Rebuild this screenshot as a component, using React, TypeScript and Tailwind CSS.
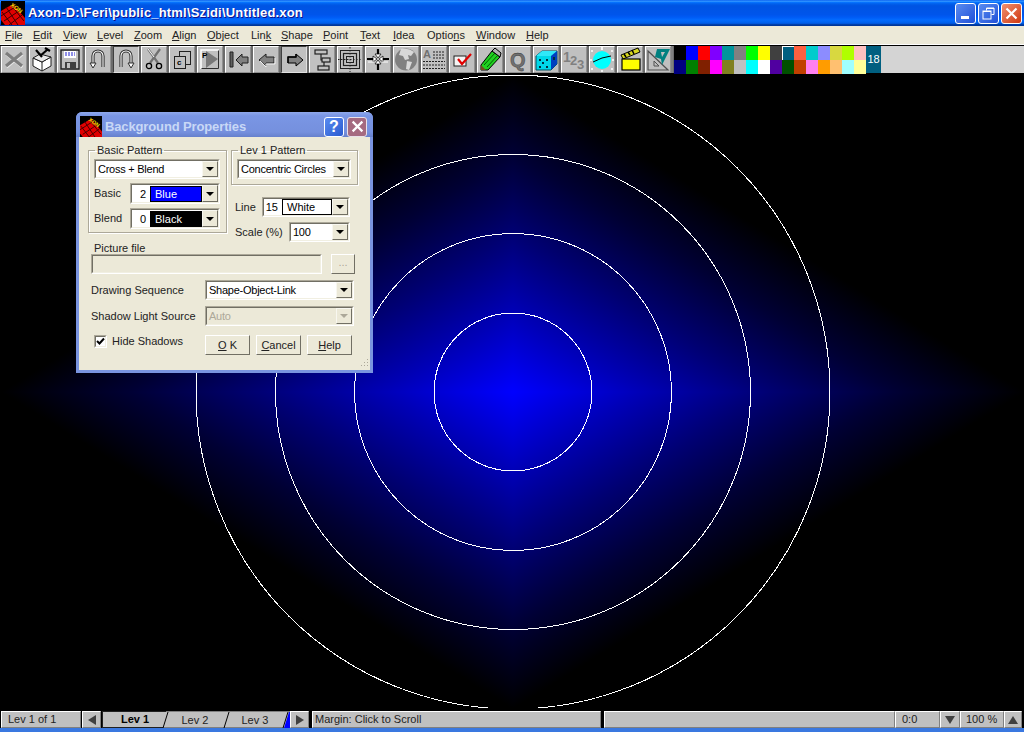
import React from 'react';

const ui = { fontFamily: '"Liberation Sans", Arial, sans-serif' };

const menus = [
  { pre: '', u: 'F', post: 'ile', w: 'w-[28px]' },
  { pre: '', u: 'E', post: 'dit', w: 'w-[30px]' },
  { pre: '', u: 'V', post: 'iew', w: 'w-[34px]' },
  { pre: '', u: 'L', post: 'evel', w: 'w-[37px]' },
  { pre: '', u: 'Z', post: 'oom', w: 'w-[38px]' },
  { pre: '', u: 'A', post: 'lign', w: 'w-[35px]' },
  { pre: '', u: 'O', post: 'bject', w: 'w-[44px]' },
  { pre: 'Lin', u: 'k', post: '', w: 'w-[30px]' },
  { pre: '', u: 'S', post: 'hape', w: 'w-[42px]' },
  { pre: '', u: 'P', post: 'oint', w: 'w-[37px]' },
  { pre: '', u: 'T', post: 'ext', w: 'w-[33px]' },
  { pre: '', u: 'I', post: 'dea', w: 'w-[34px]' },
  { pre: 'Optio', u: 'n', post: 's', w: 'w-[49px]' },
  { pre: '', u: 'W', post: 'indow', w: 'w-[50px]' },
  { pre: '', u: 'H', post: 'elp', w: 'w-[30px]' },
];

const paletteTop = ['#000000', '#0000ff', '#ff0000', '#8000ff', '#00959c', '#808080', '#00ff00', '#ffff00', '#404040', '#005f80', '#ff6040', '#00cccc', '#8c8cff', '#d8d840', '#b0ff00', '#ffc0c0'];
const paletteBottom = ['#000080', '#008000', '#802000', '#ff00ff', '#808020', '#c0c0c0', '#00ffff', '#ffffff', '#5000a0', '#005000', '#c04000', '#ff80f0', '#ff9c00', '#ffc070', '#a0ffff', '#ffff99'];

// quadrants of the diamond blend on the canvas
const quadrants = [
  { sx: 512, sy: 317 },
  { sx: -512, sy: 317 },
  { sx: 512, sy: -317 },
  { sx: -512, sy: -317 },
];

function Logo({ className }: { className: string }) {
  return (
    <svg viewBox="0 0 24 24" className={className}>
      <rect width="24" height="24" fill="#000" />
      <path d="M0 10 L12 3 L24 17 L24 24 L4 24 L0 19 Z" fill="#e00000" />
      <path d="M0 15 L14 6 M3 20 L18 10 M8 24 L21 14 M5 6 L17 24 M1 11 L11 24 M10 4 L23 20" stroke="#400000" strokeWidth="1" />
      <text x="9" y="5" fontSize="6" fontWeight="700" fill="#f0e000" transform="rotate(35 9 5)" fontFamily="Liberation Sans">XON</text>
    </svg>
  );
}

const s = { fill: 'none', stroke: '#000', strokeWidth: 1.3 };

const icons: React.ReactNode[] = [
  <g key="x">
    <path d="M4 6 L20 19 M20 6 L4 19" stroke="#e8e8e8" strokeWidth="3" transform="translate(0.5 1)" />
    <path d="M4 6 L20 19 M20 6 L4 19" stroke="#7c7c7c" strokeWidth="3.2" />
  </g>,
  <g key="box">
    <path d="M3 11 L12 15 L21 10 V19 L12 24 L3 19 Z" fill="#fff" stroke="#202020" />
    <path d="M12 15 V24" stroke="#202020" />
    <path d="M12 15 L3 11 L10 7 L21 10 Z" fill="#e8e8e8" stroke="#202020" />
    <path d="M6 3 L12 10 M10 9 L17 3 M15 1 L20 4" stroke="#000" strokeWidth="2.2" />
  </g>,
  <g key="floppy">
    <path d="M3 3 H21 V22 H3 Z" fill="#c0c0c0" stroke="#202020" strokeWidth="1.4" />
    <rect x="6" y="4" width="12" height="7" fill="#fff" />
    <path d="M7 6 H17 M7 8 H17" stroke="#2020d0" strokeDasharray="2 1" />
    <rect x="7" y="15" width="11" height="7" fill="#404040" />
    <rect x="9" y="16" width="3" height="5" fill="#c0c0c0" />
  </g>,
  <g key="undo">
    <path d="M7 18 V9 A5 5 0 0 1 17 9 V20" fill="none" stroke="#303030" strokeWidth="3.2" />
    <path d="M7 17 V9 A5 5 0 0 1 17 9 V20" fill="none" stroke="#fff" strokeWidth="1.1" />
    <path d="M4 16 L7 21 L10 16 Z" fill="#fff" stroke="#303030" />
  </g>,
  <g key="redo">
    <path d="M7 20 V9 A5 5 0 0 1 17 9 V18" fill="none" stroke="#303030" strokeWidth="3.2" />
    <path d="M7 20 V9 A5 5 0 0 1 17 9 V17" fill="none" stroke="#fff" strokeWidth="1.1" />
    <path d="M14 16 L17 21 L20 16 Z" fill="#fff" stroke="#303030" />
  </g>,
  <g key="scissors">
    <path d="M6 2 L16 16 M18 2 L8 16" stroke="#707070" strokeWidth="2.2" />
    <path d="M6 2 L12 10" stroke="#fff" />
    <circle cx="7" cy="19" r="2.6" {...s} />
    <circle cx="17" cy="19" r="2.6" {...s} />
  </g>,
  <g key="copy">
    <rect x="9.5" y="4.5" width="11" height="13" fill="#c0c0c0" stroke="#202020" />
    <rect x="4.5" y="9.5" width="11" height="12" fill="#c0c0c0" stroke="#202020" />
    <text x="7" y="18" fontSize="8" fill="#000" fontWeight="700" fontFamily="Liberation Sans">c</text>
  </g>,
  <g key="paste">
    <path d="M3 22 V3 H21" fill="none" stroke="#fff" strokeWidth="1.5" />
    <path d="M3.5 21.5 H20.5 V3.5" fill="none" stroke="#303030" />
    <path d="M8 21 L20 12 L8 4 Z" fill="#787878" />
    <text x="4" y="11" fontSize="8" fill="#000" fontWeight="700" fontFamily="Liberation Sans">P</text>
  </g>,
  <g key="first">
    <path d="M4 5 H7 V20 H4 Z" fill="#606060" stroke="#202020" />
    <path d="M10 13 L16 7 V10 H22 V16 H16 V19 Z" fill="#808080" stroke="#202020" />
  </g>,
  <g key="left">
    <path d="M5 13 L12 7 V10 H20 V16 H12 V19 Z" fill="#808080" stroke="#202020" />
    <path d="M6 14 L12 20 V17 H21 V11" fill="none" stroke="#f0f0f0" />
  </g>,
  <g key="right">
    <path d="M21 13 L14 7 V10 H6 V16 H14 V19 Z" fill="#808080" stroke="#000" />
    <path d="M14 7 V10 H6 V16" fill="none" stroke="#000" strokeWidth="1.4" />
  </g>,
  <g key="tree" fill="#c0c0c0" stroke="#202020" strokeWidth="1.2">
    <rect x="5" y="3" width="12" height="4" />
    <rect x="12" y="11" width="8" height="4" />
    <rect x="8" y="19" width="11" height="4" />
    <path d="M11 7 V13 H12 M14 15 V19" fill="none" />
  </g>,
  <g key="target" fill="none" stroke="#202020">
    <rect x="2.5" y="3.5" width="19" height="18" />
    <rect x="5.5" y="6.5" width="13" height="12" strokeWidth="1.2" />
    <rect x="8.5" y="9.5" width="7" height="6" />
    <path d="M12 0 V25 M0 12.5 H24" strokeDasharray="1.5 1.5" />
  </g>,
  <g key="arrows">
    <path d="M1 12 H8 M23 12 H16 M12 2 V8 M12 23 V16" stroke="#000" strokeWidth="2.2" />
    <path d="M11 12 L7 9 V15 Z M13 12 L17 9 V15 Z M12 11 L9 7 H15 Z M12 13 L9 17 H15 Z" fill="#fff" stroke="#000" strokeWidth="0.7" />
    <path d="M2 15 H8 M16 15 H22" stroke="#fff" />
  </g>,
  <g key="globe">
    <circle cx="12" cy="12.5" r="11" fill="#808080" />
    <path d="M7 2 C11 1 17 2 20 5 L17 9 L14 8 L15 12 L11 13 L9 9 L5 8 Z M13 14 L18 15 L15 23 L12 22 Z" fill="#d8d8d8" />
  </g>,
  <g key="text">
    <text x="1" y="11" fontSize="11" fontWeight="700" fill="#707070" fontFamily="Liberation Sans">A</text>
    <path d="M11 5 H23 M11 8 H23 M11 11 H23 M1 14.5 H23 M1 18 H23 M1 21.5 H23" stroke="#202020" strokeDasharray="2 1" />
  </g>,
  <g key="check">
    <rect x="4" y="9" width="12" height="10" fill="#f4f4f4" stroke="#202020" strokeWidth="1" />
    <path d="M8 12 L12 17 L21 7" fill="none" stroke="#e00000" strokeWidth="2.2" />
  </g>,
  <g key="pencil">
    <path d="M3 18 L14 4 L22 10 L10 23 L3 23 Z" fill="#20d020" stroke="#000" />
    <path d="M6 18 L17 6 M9 20 L20 8" stroke="#006000" />
    <path d="M3 18 L3 23 L8 23 Z" fill="#705020" />
    <path d="M14 4 L17 1 L23 6 L22 10 Z" fill="#b0b0b0" stroke="#000" />
  </g>,
  <text key="q" x="4" y="20" fontSize="20" fontWeight="700" fill="#707070" stroke="#303030" strokeWidth="0.4" fontFamily="Liberation Sans">Q</text>,
  <g key="dice">
    <path d="M2 9 L8 4 H23 V17 L17 23 H2 Z" fill="#00d8e8" stroke="#005060" />
    <path d="M2 9 L8 4 H23 L17 9 Z" fill="#30e8f8" />
    <path d="M17 9 V23 L23 17 V4 Z" fill="#0040c0" />
    <path d="M5 12 h2 v2 h-2 z M12 12 h2 v2 h-2 z M8 15 h2 v2 h-2 z M5 19 h2 v2 h-2 z M12 19 h2 v2 h-2 z M19 10 h2 v3 h-2 z" fill="#003040" />
  </g>,
  <g key="n123" fill="#808080" fontFamily="Liberation Sans" fontWeight="700">
    <text x="1" y="15" fontSize="14">1</text>
    <text x="8" y="18" fontSize="13">2</text>
    <text x="15" y="22" fontSize="13">3</text>
  </g>,
  <g key="clock">
    <circle cx="12" cy="13" r="9" fill="#00ffff" />
    <path d="M3 15 L12 11 L21 9" stroke="#000" fill="none" strokeWidth="1" />
    <path d="M12 0 V3 M12 23 V26 M1 4 h2 M21 4 h2 M0 13 h2 M22 13 h2 M1 22 h2 M21 22 h2" stroke="#fff" strokeWidth="1.6" />
  </g>,
  <g key="clapper">
    <path d="M3 8 L20 1 L22 5 L5 12 Z" fill="#d8d820" stroke="#000" />
    <path d="M6 7 L8 10 M10 5 L12 8 M14 3 L16 7" stroke="#000" strokeWidth="1.5" />
    <rect x="4" y="12" width="18" height="11" fill="#ffff00" stroke="#000" strokeWidth="1.2" />
  </g>,
  <g key="square">
    <path d="M2 4 L22 23 H2 Z" fill="#c0c0c0" stroke="#505050" strokeWidth="1.2" />
    <path d="M8 14 V19 H13 Z" fill="none" stroke="#505050" />
    <path d="M11 2 H24 L16 18 L15 12 L9 10 Z" fill="#008080" />
    <path d="M15 5 H19 L16 10 Z" fill="#c0c0c0" />
  </g>,
];

function ToolButton({ pressed, children }: { pressed?: boolean; children: React.ReactNode }) {
  return (
    <div className={`w-[26px] h-[27px] mr-[2px] bg-[#c0c0c0] border ${pressed ? 'border-t-[#404040] border-l-[#404040] border-r-[#e0e0e0] border-b-[#e0e0e0]' : 'border-t-white border-l-white border-r-[#909090] border-b-[#909090]'}`}>
      <svg viewBox="0 0 24 25" className="w-[24px] h-[25px]">{children}</svg>
    </div>
  );
}

function Sunken({ className, children }: { className: string; children?: React.ReactNode }) {
  return (
    <div className={`border border-t-[#aca899] border-l-[#aca899] border-r-white border-b-white ${className}`}>
      <div className="w-full h-full border border-t-[#716f64] border-l-[#716f64] border-r-[#f1efe2] border-b-[#f1efe2] flex items-stretch">
        {children}
      </div>
    </div>
  );
}

function DropButton({ disabled }: { disabled?: boolean }) {
  return (
    <div className="w-[16px] shrink-0 bg-[#ece9d8] border border-t-[#f8f7f0] border-l-[#f8f7f0] border-r-[#716f64] border-b-[#716f64] flex items-center justify-center">
      <div className={`w-0 h-0 border-l-[4px] border-r-[4px] border-t-[4px] border-l-transparent border-r-transparent ${disabled ? 'border-t-[#aca899]' : 'border-t-black'}`} />
    </div>
  );
}

function Combo({ className, text, disabled }: { className: string; text: string; disabled?: boolean }) {
  return (
    <Sunken className={className}>
      <div className={`flex-1 pl-[2px] pt-[1px] leading-[15px] tracking-[-0.25px] whitespace-nowrap ${disabled ? 'bg-[#ece9d8] text-[#aca899]' : 'bg-white text-black'}`}>{text}</div>
      <DropButton disabled={disabled} />
    </Sunken>
  );
}

function ColorCombo({ className, num, name, swatch }: { className: string; num: string; name: string; swatch: string }) {
  return (
    <Sunken className={className}>
      <div className="flex-1 bg-white flex items-center">
        <span className="w-[18px] text-right pr-[4px] leading-[16px] text-black">{num}</span>
        <span className={`flex-1 h-[16px] pl-[4px] leading-[15px] border border-black ${swatch}`}>{name}</span>
      </div>
      <DropButton />
    </Sunken>
  );
}

function DlgButton({ children }: { children: React.ReactNode }) {
  return (
    <div className="w-[45px] h-[20px] bg-[#ece9d8] border border-t-white border-l-white border-r-[#716f64] border-b-[#716f64] flex items-center justify-center">
      <span className="leading-none">{children}</span>
    </div>
  );
}

function Group({ title, className, children }: { title: string; className: string; children: React.ReactNode }) {
  return (
    <fieldset className={`border border-[#aca899] shadow-[inset_1px_1px_0_#fff,1px_1px_0_#fff] ${className}`}>
      <legend className="ml-[1px] px-[2px] leading-[12px]">{title}</legend>
      {children}
    </fieldset>
  );
}

function Raised({ className, children }: { className: string; children?: React.ReactNode }) {
  return (
    <div className={`h-[17px] bg-[#c0c0c0] border border-t-white border-l-white border-r-[#808080] border-b-[#808080] flex items-center ${className}`}>
      {children}
    </div>
  );
}

function Dialog() {
  return (
    <div className="absolute left-[76px] top-[112px] w-[297px] h-[261px] rounded-t-[6px] bg-[#7a94e0] p-[3px] pt-0 flex flex-col text-[11px] text-[#222]">
      <div className="h-[25px] pt-[4px] -mx-[3px] px-[4px] rounded-t-[6px] bg-[linear-gradient(180deg,#8fa8ea_0%,#7a96e4_15%,#7590de_80%,#6680cc_100%)] flex items-center">
        <Logo className="w-[22px] h-[22px]" />
        <span className="ml-[3px] flex-1 text-[13px] font-bold tracking-[-0.13px] text-[#c8d8f6]">Background Properties</span>
        <div className="w-[20px] h-[20px] mr-[3px] rounded-[3px] border border-white bg-[linear-gradient(135deg,#5a8cf0,#2a5ad0)] flex items-center justify-center text-white font-bold text-[16px]">?</div>
        <div className="w-[20px] h-[20px] mr-[2px] rounded-[3px] border border-[#e8e0e8] bg-[#a56a80] flex items-center justify-center">
          <svg viewBox="0 0 12 12" className="w-[13px] h-[13px]"><path d="M1.5 1.5 L10.5 10.5 M10.5 1.5 L1.5 10.5" stroke="#fff" strokeWidth="2" /></svg>
        </div>
      </div>
      <div className="flex-1 bg-[#ece9d8] pl-[12px] pr-[15px] flex flex-col relative">
        <div className="flex mt-[7px] ml-[-3px]">
          <Group title="Basic Pattern" className="w-[139px] h-[89px] px-[5px] shrink-0">
            <Combo className="w-[126px] h-[20px] mt-[3px]" text="Cross + Blend" />
            <div className="flex items-center mt-[4px] h-[21px]">
              <span className="w-[36px]">Basic</span>
              <ColorCombo className="w-[90px] h-[21px]" num="2" name="Blue" swatch="bg-[#0000ff] text-white" />
            </div>
            <div className="flex items-center mt-[4px] h-[21px]">
              <span className="w-[36px]">Blend</span>
              <ColorCombo className="w-[90px] h-[21px]" num="0" name="Black" swatch="bg-black text-white" />
            </div>
          </Group>
          <div className="ml-[4px] w-[127px]">
            <Group title="Lev 1 Pattern" className="w-[127px] h-[41px] px-[5px]">
              <Combo className="w-[114px] h-[20px] mt-[3px]" text="Concentric Circles" />
            </Group>
            <div className="flex items-center mt-[12px] ml-[4px] h-[20px]">
              <span className="w-[27px]">Line</span>
              <ColorCombo className="w-[88px] h-[20px]" num="15" name="White" swatch="bg-white text-black" />
            </div>
            <div className="flex items-center mt-[5px] ml-[4px] h-[20px]">
              <span className="w-[54px]">Scale (%)</span>
              <Combo className="w-[61px] h-[20px]" text="100" />
            </div>
          </div>
        </div>
        <div className="leading-[12px] mt-0 ml-[3px]">Picture file</div>
        <div className="flex">
          <Sunken className="w-[231px] h-[20px]" />
          <div className="ml-[9px] w-[24px] h-[20px] bg-[#ece9d8] border border-t-white border-l-white border-r-[#716f64] border-b-[#716f64] text-[#aca899] text-center leading-[14px]">...</div>
        </div>
        <div className="flex items-center mt-[6px] h-[20px]">
          <span className="w-[114px]">Drawing Sequence</span>
          <Combo className="w-[149px] h-[20px]" text="Shape-Object-Link" />
        </div>
        <div className="flex items-center mt-[6px] h-[20px]">
          <span className="w-[114px]">Shadow Light Source</span>
          <Combo className="w-[149px] h-[20px]" text="Auto" disabled />
        </div>
        <div className="flex mt-[9px]">
          <div className="w-[114px] flex items-start pl-[3px]">
            <Sunken className="w-[13px] h-[13px]">
              <div className="flex-1 bg-white">
                <svg viewBox="0 0 9 9" className="w-[9px] h-[9px]"><path d="M1 4 L3.5 6.5 L8 1.5" fill="none" stroke="#000" strokeWidth="2" /></svg>
              </div>
            </Sunken>
            <span className="ml-[5px] leading-[12px]">Hide Shadows</span>
          </div>
          <div className="flex gap-[6px]">
            <DlgButton><u>O</u>&nbsp;K</DlgButton>
            <DlgButton><u>C</u>ancel</DlgButton>
            <DlgButton><u>H</u>elp</DlgButton>
          </div>
        </div>
        <svg viewBox="0 0 10 10" className="absolute right-[1px] bottom-[2px] w-[10px] h-[10px]">
          <path d="M8 1 h1 v1 h-1 z M5 4 h1 v1 h-1 z M8 4 h1 v1 h-1 z M2 7 h1 v1 h-1 z M5 7 h1 v1 h-1 z M8 7 h1 v1 h-1 z" fill="#aca899" />
        </svg>
      </div>
    </div>
  );
}

export default function App() {
  return (
    <div className="relative w-[1024px] h-[732px] overflow-hidden bg-black flex flex-col text-[11px]" style={ui}>
      {/* title bar */}
      <div className="h-[26px] shrink-0 flex items-center pl-[1px] pr-[2px] bg-[linear-gradient(180deg,#0058ee_0%,#3593ff_4%,#288eff_6%,#127dff_8%,#036ffc_10%,#0262ee_14%,#0057e5_20%,#0054e3_24%,#0055eb_56%,#005bf5_66%,#026afe_76%,#0062ef_86%,#0052d6_92%,#0040ab_94%,#003092_100%)]">
        <Logo className="w-[24px] h-[24px]" />
        <span className="ml-[3px] flex-1 text-[13px] font-bold tracking-[0.18px] text-white [text-shadow:1px_1px_0_#0f1089]">Axon-D:\Feri\public_html\Szidi\Untitled.xon</span>
        <div className="w-[21px] h-[21px] mr-[2px] rounded-[3px] border border-white bg-[linear-gradient(135deg,#5a8cf0,#2050d8)] flex items-end pl-[5px] pb-[4px]">
          <div className="w-[8px] h-[3px] bg-white" />
        </div>
        <div className="w-[21px] h-[21px] mr-[2px] rounded-[3px] border border-white bg-[linear-gradient(135deg,#5a8cf0,#2050d8)] flex items-center justify-center">
          <svg viewBox="0 0 13 13" className="w-[13px] h-[13px]">
            <path d="M4.5 3.5 V1 H12 V7.5 H9.5" fill="none" stroke="#fff" />
            <rect x="1" y="4" width="8" height="8" fill="none" stroke="#fff" />
            <path d="M1 4.5 H9 M4.5 1.5 H12" stroke="#fff" />
          </svg>
        </div>
        <div className="w-[21px] h-[21px] rounded-[3px] border border-white bg-[linear-gradient(135deg,#f09070,#d03810)] flex items-center justify-center">
          <svg viewBox="0 0 13 13" className="w-[13px] h-[13px]"><path d="M1.5 1.5 L11.5 11.5 M11.5 1.5 L1.5 11.5" stroke="#fff" strokeWidth="2.2" /></svg>
        </div>
      </div>

      {/* menu */}
      <div className="h-[19px] shrink-0 bg-[#ece9d8] flex items-center pl-[5px] text-[#222] border-b border-white">
        {menus.map(m => (
          <span key={m.u + m.post} className={m.w}>
            {m.pre}<u>{m.u}</u>{m.post}
          </span>
        ))}
      </div>

      {/* toolbar */}
      <div className="h-[30px] shrink-0 bg-[#6c6c6c] border-t border-b-2 border-black flex pl-[1px]">
        {icons.map((icon, i) => (
          <ToolButton key={i} pressed={i === 4 || i === 10}>{icon}</ToolButton>
        ))}
        <div className="w-[2px] h-[27px] -ml-[2px] bg-[#808080] mr-[2px]" />
        <div className="flex flex-col h-[27px] ml-[-1px] bg-black">
          {[paletteTop, paletteBottom].map((row, r) => (
            <div key={r} className="flex h-[14px]">
              {row.map((c, i) => (
                <div
                  key={i}
                  className={`w-[12px] h-[14px] ${r === 0 && i === 9 ? 'border-t border-l border-white' : ''}`}
                  style={{ backgroundColor: c }}
                />
              ))}
            </div>
          ))}
        </div>
        <div className="w-[15px] h-[27px] bg-[#005f80] text-white text-[11px] flex items-center justify-center">18</div>
        <div className="flex-1 h-[27px] bg-[#d4d4d4]" />
      </div>

      {/* drawing area */}
      <div className="flex-1 bg-black">
        <svg viewBox="0 0 1024 633" className="w-[1024px] h-[633px] block">
          <defs>
            <linearGradient id="blend" x1="0" y1="0" x2="0.5" y2="0.5" gradientUnits="userSpaceOnUse">
              <stop offset="0" stopColor="#0000ff" />
              <stop offset="0.25" stopColor="#0000b7" />
              <stop offset="0.5" stopColor="#000073" />
              <stop offset="0.75" stopColor="#000034" />
              <stop offset="1" stopColor="#000000" />
            </linearGradient>
          </defs>
          {quadrants.map(q => (
            <polygon
              key={`${q.sx}${q.sy}`}
              points="0,0 1,0 0,1"
              fill="url(#blend)"
              shapeRendering="crispEdges"
              transform={`translate(513 317) scale(${q.sx} ${q.sy})`}
            />
          ))}
          {[79, 158.5, 237.5, 317].map(r => (
            <circle key={r} cx="513" cy="317" r={r} fill="none" stroke="#fff" strokeWidth="1" shapeRendering="crispEdges" />
          ))}
        </svg>
      </div>

      {/* status bar */}
      <div className="h-[20px] shrink-0 flex items-end pl-[1px] pr-[2px] bg-black text-[#222]">
        <Raised className="w-[80px] pl-[6px] mr-[1px]">Lev 1 of 1</Raised>
        <Raised className="w-[19px] justify-center mr-[1px]">
          <div className="w-0 h-0 border-y-[5px] border-r-[8px] border-y-transparent border-r-[#404040]" />
        </Raised>
        <svg viewBox="0 0 188 17" className="w-[188px] h-[17px]">
          <rect width="188" height="17" fill="#c0c0c0" />
          <path d="M0 0.5 H188 M0 16.5 H188" stroke="#808080" />
          <path d="M0.5 0 V17 M0 0.5 H64 M0 16.5 H61" stroke="#202020" />
          <path d="M61 17 L66 1 M122 17 L127 1 M181 17 L186 1" stroke="#000" />
          <path d="M182 17 L187 1 H188 V17 Z" fill="#0000ff" />
          <text x="19" y="12" fontSize="11" fontWeight="700" fill="#000" fontFamily="Liberation Sans">Lev 1</text>
          <text x="79.5" y="13" fontSize="11" fill="#222" fontFamily="Liberation Sans">Lev 2</text>
          <text x="139.5" y="13" fontSize="11" fill="#222" fontFamily="Liberation Sans">Lev 3</text>
        </svg>
        <Raised className="w-[19px] justify-center mr-[3px]">
          <div className="w-0 h-0 border-y-[5px] border-l-[8px] border-y-transparent border-l-[#404040]" />
        </Raised>
        <Raised className="w-[289px] pl-[2px] mr-[3px]">Margin: Click to Scroll</Raised>
        <Raised className="w-[291px]" />
        <Raised className="w-[45px] pl-[6px]">0:0</Raised>
        <Raised className="w-[20px] justify-center">
          <div className="w-0 h-0 border-x-[5px] border-t-[8px] border-x-transparent border-t-[#404040]" />
        </Raised>
        <Raised className="w-[44px] pl-[5px]">100 %</Raised>
        <Raised className="w-[18px] justify-center">
          <div className="w-0 h-0 border-x-[5px] border-b-[8px] border-x-transparent border-b-[#404040]" />
        </Raised>
      </div>
      <div className="h-[4px] shrink-0 bg-[#3a78e0]" />

      <Dialog />
    </div>
  );
}
